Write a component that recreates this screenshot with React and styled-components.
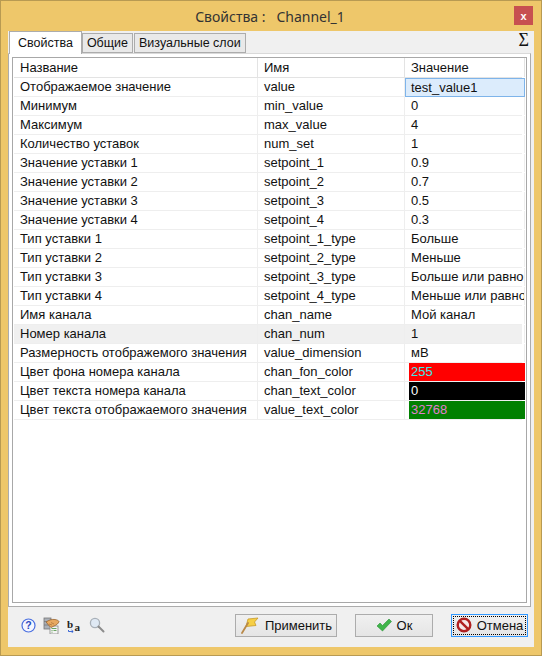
import React from "react";
import styled, { createGlobalStyle } from "styled-components";

const Global = createGlobalStyle`
  html, body { margin: 0; padding: 0; background: #eec76a; }
  * { box-sizing: border-box; }
`;
const Win = styled.div`
  width: 542px; height: 656px; background: #eec76a; border: 1px solid #b89a52;
  display: flex; flex-direction: column; font-family: "Liberation Sans", Arial, sans-serif;
  font-size: 13px; color: #111;
`;
const TitleBar = styled.div`
  height: 30px; flex: none; position: relative; display: flex; align-items: center; justify-content: center;
  font-family: "Noto Sans", sans-serif; font-size: 14px; color: #333; white-space: pre; padding-right: 2px;
`;
const Close = styled.div`
  position: absolute; right: 8px; top: 5px; width: 19px; height: 19px; background: #c75050;
  color: #fff; font: bold 11px "Liberation Sans", sans-serif; display: flex; align-items: center; justify-content: center;
`;
const Body = styled.div`
  flex: 1; margin: 0 7px 8px; background: #f0f0f0; display: flex; flex-direction: column; min-height: 0;
`;
const TabBar = styled.div`
  height: 22px; flex: none; display: flex; align-items: flex-end; position: relative; padding-left: 1px;
`;
const Tab = styled.div`
  height: ${p => (p.$active ? 22 : 20)}px; padding: 0 ${p => (p.$active ? 8 : 4)}px 0;
  margin-left: ${p => (p.$active ? 0 : 0)}px; margin-right: ${p => (p.$active ? 0 : 1)}px;
  background: ${p => (p.$active ? "#fff" : "#e9e9e9")};
  border: 1px solid #acacac; border-bottom: ${p => (p.$active ? "none" : "1px solid #acacac")};
  display: flex; align-items: center; font-size: 12.5px;
  ${p => p.$active && "position: relative; z-index: 1; margin-bottom: -1px; height: 23px;"}
`;
const Sigma = styled.span`
  position: absolute; right: 5px; top: -1px; font: 18px "Liberation Serif", serif; color: #111;
`;
const Pane = styled.div`
  flex: none; height: 554px; background: #fff; border: 1px solid #acacac; border-top-color: #d9d9d9; padding: 3px;
  margin: 0 3px 0 0;
`;
const Table = styled.div`
  height: 100%; border: 1px solid #a8a8a8; padding: 0 4px 0 1px; background: #fff;
`;
const Row = styled.div`
  display: grid; grid-template-columns: 244px 147px 120px; height: 19px;
  background: ${p => (p.$hi ? "#f0f0f0" : "transparent")};
  border-bottom: 1px solid #eeeeee; align-items: stretch;
`;
const Head = styled(Row)`
  height: 20px; border-bottom: 1px solid #e3e3e3;
`;
const Cell = styled.div`
  padding-left: 6px; line-height: 18px; border-right: 1px solid #eeeeee; white-space: nowrap; overflow: hidden;
  letter-spacing: ${p => p.$sp || 0}px;
`;
const HCell = styled(Cell)`
  border-right: 1px solid #e3e3e3; line-height: 19px;
`;
const Selected = styled(Cell)`
  background: #dcecfc; border: 1px solid #7eb4ea; margin-top: 0; height: 19px; padding-left: 5px;
`;
const Swatch = styled.div`
  margin: 0 0 0 4px; padding-left: 2px; background: ${p => p.$bg}; color: ${p => p.$fg}; line-height: 18px;
`;
const Footer = styled.div`
  flex: 1; display: flex; align-items: center; padding: 0 6px 4px 13px;
`;
const Tools = styled.div`
  display: flex; align-items: center; gap: 7px; flex: 1;
`;
const Btn = styled.div`
  height: 23px; width: ${p => p.$w}px; margin-left: ${p => p.$ml}px; border: 1px solid #acacac; background: linear-gradient(#f0f0f0,#e5e5e5);
  display: flex; align-items: center; justify-content: center; gap: 5px; font-size: 13px; position: relative;
`;
const Default = styled(Btn)`
  border: 1px solid #3399ff; &::after { content: ""; position: absolute; inset: 1px; border: 1px dotted #000; }
`;

const Help = () => (
  <svg width="15" height="15" viewBox="0 0 15 15">
    <circle cx="7.5" cy="7.5" r="6.5" fill="#f4f6ff" stroke="#4a6fe0" strokeWidth="1.2" />
    <text x="7.5" y="11.2" textAnchor="middle" fontSize="10.5" fontWeight="bold" fill="#2a48c0" fontFamily="Liberation Sans">?</text>
  </svg>
);
const Hand = () => (
  <svg width="17" height="17" viewBox="0 0 17 17">
    <rect x="1" y="1" width="7" height="11" fill="#aab0b8" stroke="#777" strokeWidth=".8" />
    <path d="M1 4.5h7M1 8h7" stroke="#777" strokeWidth=".8" />
    <rect x="7" y="9" width="8" height="8" fill="#f4f4f4" stroke="#888" strokeWidth=".8" />
    <path d="M8.5 11.5h5M8.5 13.5h1M10.5 13.5h3M8.5 15.2h1" stroke="#5a9a50" strokeWidth=".9" />
    <path d="M3 5c3-2 6-3 9-2.5 2 .3 3.5 1 4 2-.5 2-2.5 3.5-5 4.5L8 10.5 5.5 8z" fill="#e8a860" stroke="#8c5a28" strokeWidth=".7" />
    <path d="M6 7l3 1M8 5.5l3 1.5" stroke="#8c5a28" strokeWidth=".5" />
  </svg>
);
const Ba = () => (
  <svg width="15" height="15" viewBox="0 0 15 15">
    <text x="0" y="9.5" fontFamily="Liberation Serif" fontWeight="bold" fontSize="11" fill="#222">b</text>
    <text x="7.5" y="13" fontFamily="Liberation Serif" fontWeight="bold" fontSize="11" fill="#222">a</text>
    <path d="M1.5 12v1.5H6M4.5 12l1.7 1.5L4.5 15" fill="none" stroke="#2a5ad0" strokeWidth=".9" />
  </svg>
);
const Lens = () => (
  <svg width="16" height="16" viewBox="0 0 16 16">
    <circle cx="6" cy="6" r="4.6" fill="#dfe9f4" stroke="#a8b0b8" strokeWidth="1.3" />
    <path d="M9.5 9.5L14.5 14.5" stroke="#8c8c8c" strokeWidth="2" strokeLinecap="round" />
  </svg>
);
const Flag = () => (
  <svg width="20" height="17" viewBox="0 0 20 17">
    <path d="M8 2 L18 1 L14.5 5 L16 8.5 L6 9.5z" fill="#f6cf45" stroke="#c89a28" strokeWidth=".8" />
    <path d="M8 6 L2 16" stroke="#b98a4a" strokeWidth="1.8" strokeLinecap="round" />
  </svg>
);
const Check = () => (
  <svg width="16" height="14" viewBox="0 0 16 14">
    <path d="M1 8l3-3 2.5 2.5L13 1l2.5 2.5-9 9.5z" fill="#3fb54a" stroke="#2a8f35" strokeWidth=".6" />
  </svg>
);
const Stop = () => (
  <svg width="16" height="16" viewBox="0 0 16 16">
    <circle cx="8" cy="8" r="6.3" fill="#f6e8e8" stroke="#b02020" strokeWidth="2.4" />
    <path d="M3.8 3.8L12.2 12.2" stroke="#b02020" strokeWidth="2.4" />
  </svg>
);

const rows = [
  ["Отображаемое значение", "value", "test_value1"],
  ["Минимум", "min_value", "0"],
  ["Максимум", "max_value", "4"],
  ["Количество уставок", "num_set", "1"],
  ["Значение уставки 1", "setpoint_1", "0.9"],
  ["Значение уставки 2", "setpoint_2", "0.7"],
  ["Значение уставки 3", "setpoint_3", "0.5"],
  ["Значение уставки 4", "setpoint_4", "0.3"],
  ["Тип уставки 1", "setpoint_1_type", "Больше"],
  ["Тип уставки 2", "setpoint_2_type", "Меньше"],
  ["Тип уставки 3", "setpoint_3_type", "Больше или равно"],
  ["Тип уставки 4", "setpoint_4_type", "Меньше или равно"],
  ["Имя канала", "chan_name", "Мой канал"],
  ["Номер канала", "chan_num", "1"],
  ["Размерность отображемого значения", "value_dimension", "мВ"],
  ["Цвет фона номера канала", "chan_fon_color", "255", "#ff0000", "#40e8e8"],
  ["Цвет текста номера канала", "chan_text_color", "0", "#000000", "#ffffff"],
  ["Цвет текста отображаемого значения", "value_text_color", "32768", "#008000", "#e080d0"],
];

export default function App() {
  return (
    <Win>
      <Global />
      <TitleBar>
        {"Свойства :   Channel_1"}
        <Close>x</Close>
      </TitleBar>
      <Body>
        <TabBar>
          <Tab $active>Свойства</Tab>
          <Tab>Общие</Tab>
          <Tab>Визуальные слои</Tab>
          <Sigma>Σ</Sigma>
        </TabBar>
        <Pane>
          <Table>
            <Head>
              <HCell>Название</HCell>
              <HCell>Имя</HCell>
              <HCell>Значение</HCell>
            </Head>
            {rows.map(([a, b, c, bg, fg], i) => (
              <Row key={b} $hi={i === 13}>
                <Cell>{a}</Cell>
                <Cell>{b}</Cell>
                {i === 0 ? <Selected>{c}</Selected> : bg ? <Swatch $bg={bg} $fg={fg}>{c}</Swatch> : <Cell>{c}</Cell>}
              </Row>
            ))}
          </Table>
        </Pane>
        <Footer>
          <Tools>
            <Help /><Hand /><Ba /><Lens />
          </Tools>
          <Btn $w={102}><Flag />Применить</Btn>
          <Btn $w={78} $ml={18}><Check />Ок</Btn>
          <Default $w={77} $ml={18}><Stop />Отмена</Default>
        </Footer>
      </Body>
    </Win>
  );
}
